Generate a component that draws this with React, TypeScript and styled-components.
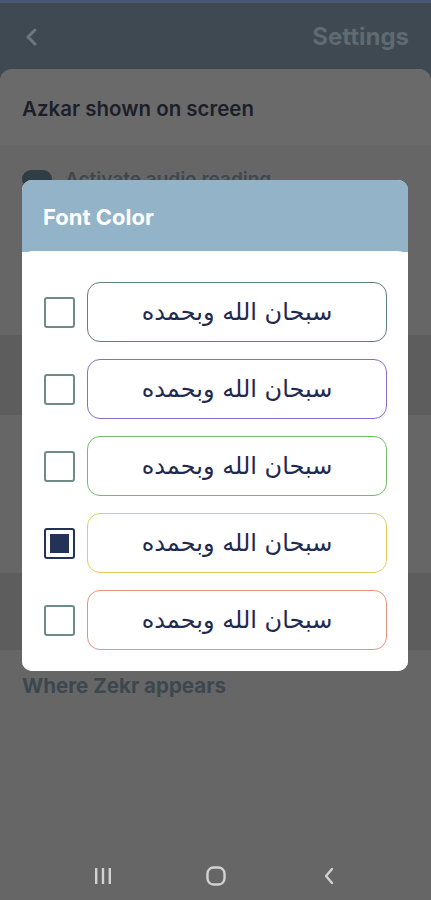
import React from "react";
import styled, { createGlobalStyle } from "styled-components";

const GlobalStyle = createGlobalStyle`
  html, body {
    margin: 0;
    padding: 0;
    background: #666666;
  }
  body {
    font-family: Inter, "Noto Sans", sans-serif;
  }
`;

const swatches = ["#5f807b", "#8c6bcf", "#72bd6b", "#e3cd5a", "#e8937f"];

export default function App() {
  const [selected, setSelected] = React.useState(3);

  return (
    <Screen>
      <GlobalStyle />
      <TopStrip />
      <Header>
        <BackButton>
          <svg width="20" height="20" viewBox="0 0 20 20" fill="none">
            <path d="M13 3 L6 10 L13 17" stroke="#6c7780" strokeWidth="3" strokeLinecap="round" strokeLinejoin="round" />
          </svg>
        </BackButton>
        <HeaderTitle>Settings</HeaderTitle>
      </Header>

      <Content>
        <SectionHead>
          <SectionTitle>Azkar shown on screen</SectionTitle>
        </SectionHead>
        <OptionRow>
          <Toggle />
          <OptionText>Activate audio reading</OptionText>
        </OptionRow>
        <Band $height={136} />
        <Band $height={80} $dark />
        <Band $height={158} />
        <Band $height={77} $dark />
        <FooterLabel>Where Zekr appears</FooterLabel>
        <Spacer />
        <NavBar>
          <svg width="18" height="16" viewBox="0 0 18 16">
            <rect x="1" y="0" width="2.4" height="16" fill="#d2d2d2" />
            <rect x="7.8" y="0" width="2.4" height="16" fill="#d2d2d2" />
            <rect x="14.6" y="0" width="2.4" height="16" fill="#d2d2d2" />
          </svg>
          <svg width="20" height="20" viewBox="0 0 20 20">
            <rect x="1.5" y="1.5" width="17" height="17" rx="6" fill="none" stroke="#d2d2d2" strokeWidth="2.4" />
          </svg>
          <svg width="14" height="18" viewBox="0 0 14 18">
            <path d="M10 2 L4 9 L10 16" fill="none" stroke="#d2d2d2" strokeWidth="2.4" strokeLinecap="round" strokeLinejoin="round" />
          </svg>
        </NavBar>
      </Content>

      <Dialog>
        <DialogHeader>Font Color</DialogHeader>
        <DialogBody>
          {swatches.map((color, i) => (
            <ColorRow key={color} onClick={() => setSelected(i)}>
              <Check $checked={selected === i}>{selected === i && <CheckFill />}</Check>
              <Sample $border={color}>سبحان الله وبحمده</Sample>
            </ColorRow>
          ))}
        </DialogBody>
      </Dialog>
    </Screen>
  );
}

const Screen = styled.div`
  position: relative;
  width: 431px;
  height: 900px;
  overflow: hidden;
  display: flex;
  flex-direction: column;
  background: #3e4951;
`;

const TopStrip = styled.div`
  height: 3px;
  background: #4a5875;
`;

const Header = styled.div`
  height: 66px;
  display: flex;
  align-items: center;
  justify-content: space-between;
  padding: 0 22px 0 22px;
  box-sizing: border-box;
`;

const BackButton = styled.div`
  display: flex;
  align-items: center;
  margin-top: 2px;
`;

const HeaderTitle = styled.div`
  font-size: 24px;
  font-weight: 700;
  color: #5f6a72;
  margin-top: 1px;
`;

const Content = styled.div`
  flex: 1;
  display: flex;
  flex-direction: column;
  background: #666666;
  border-radius: 12px 12px 0 0;
  overflow: hidden;
`;

const SectionHead = styled.div`
  height: 76px;
  background: #6a6a6a;
  display: flex;
  align-items: center;
  padding: 0 22px;
`;

const SectionTitle = styled.div`
  font-size: 20.5px;
  font-weight: 600;
  color: #1c1f29;
  margin-top: 2px;
`;

const OptionRow = styled.div`
  height: 40px;
  display: flex;
  align-items: center;
  gap: 13px;
  padding: 14px 22px 0;
`;

const Toggle = styled.div`
  width: 30px;
  height: 18px;
  border-radius: 9px;
  background: #2f3d44;
`;

const OptionText = styled.div`
  font-size: 19px;
  font-weight: 600;
  color: #3e4850;
`;

const Band = styled.div<{ $height: number; $dark?: boolean }>`
  height: ${(p) => p.$height}px;
  background: ${(p) => (p.$dark ? "#5d5d5d" : "#666666")};
`;

const FooterLabel = styled.div`
  padding: 23px 22px 0;
  font-size: 20.5px;
  font-weight: 700;
  color: #3d474e;
`;

const Spacer = styled.div`
  flex: 1;
`;

const NavBar = styled.div`
  height: 52px;
  display: grid;
  grid-template-columns: repeat(3, 113px);
  justify-content: center;
  justify-items: center;
  align-items: center;
  margin-bottom: -2px;
`;

const Dialog = styled.div`
  position: absolute;
  top: 180px;
  left: 22px;
  width: 386px;
  border-radius: 10px;
  overflow: hidden;
  background: #ffffff;
`;

const DialogHeader = styled.div`
  height: 72px;
  background: #93b3c8;
  color: #ffffff;
  font-size: 22px;
  font-weight: 700;
  display: flex;
  align-items: center;
  padding: 2px 21px 0;
  box-sizing: border-box;
`;

const DialogBody = styled.div`
  background: #ffffff;
  border-radius: 10px 10px 0 0;
  margin-top: -1px;
  padding: 31px 22px 21px 22px;
  display: flex;
  flex-direction: column;
  gap: 17px;
`;

const ColorRow = styled.div`
  display: flex;
  align-items: center;
  gap: 12px;
  cursor: pointer;
`;

const Check = styled.div<{ $checked: boolean }>`
  width: 31px;
  height: 31px;
  box-sizing: border-box;
  border: 2px solid ${(p) => (p.$checked ? "#233256" : "#6f8b89")};
  border-radius: 3px;
  padding: 4px;
  flex-shrink: 0;
`;

const CheckFill = styled.div`
  width: 100%;
  height: 100%;
  background: #233256;
`;

const Sample = styled.div<{ $border: string }>`
  width: 300px;
  height: 60px;
  flex-shrink: 0;
  box-sizing: border-box;
  border: 1.5px solid ${(p) => p.$border};
  border-radius: 13px;
  display: flex;
  align-items: center;
  justify-content: center;
  direction: rtl;
  font-family: "DejaVu Sans", "Noto Sans", sans-serif;
  font-size: 24px;
  color: #1e2a4f;
`;
